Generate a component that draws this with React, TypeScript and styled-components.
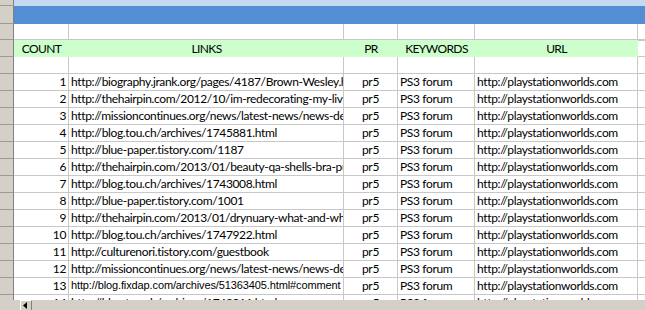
import React from "react";
import styled, { createGlobalStyle } from "styled-components";

const Global = createGlobalStyle`
  html, body { margin: 0; padding: 0; background: #ffffff; }
  body { width: 645px; height: 310px; overflow: hidden; }
`;

const COLS = "14px 55px 275px 54px 77px 163px 1fr";

const Sheet = styled.div`
  width: 645px;
  height: 310px;
  display: flex;
  flex-direction: column;
  background: #ffffff;
  font-family: Lato, "Liberation Sans", sans-serif;
  font-size: 12px;
  letter-spacing: -0.35px;
  color: #000000;
  overflow: hidden;
`;

const Rows = styled.div`
  flex: 1;
  display: flex;
  flex-direction: column;
  overflow: hidden;
`;

const Row = styled.div<{ $h: number }>`
  display: grid;
  grid-template-columns: ${COLS};
  height: ${(p) => p.$h}px;
  flex: none;
  overflow: hidden;
`;

const RowHead = styled.div`
  background: #d4d0c8;
  border-right: 1px solid #808080;
  border-bottom: 1px solid #9d9a94;
  box-sizing: border-box;
`;

const Band = styled.div<{ $bg: string }>`
  grid-column: 2 / -1;
  background: ${(p) => p.$bg};
`;

const Cell = styled.div<{ $align?: string; $arial?: boolean; $noRight?: boolean }>`
  box-sizing: border-box;
  border-right: ${(p) => (p.$noRight ? "none" : "1px solid #c8c8c8")};
  border-bottom: 1px solid #c8c8c8;
  display: flex;
  align-items: flex-end;
  justify-content: ${(p) => p.$align || "flex-start"};
  padding: 0 2px 1px 2px;
  white-space: nowrap;
  overflow: hidden;
  line-height: 15px;
  font-family: ${(p) => (p.$arial ? '"Liberation Sans", Arial, sans-serif' : "inherit")};
  font-size: ${(p) => (p.$arial ? "11px" : "inherit")};
  letter-spacing: ${(p) => (p.$arial ? "-0.12px" : "inherit")};
`;

const HeadCell = styled.div<{ $last?: boolean }>`
  box-sizing: border-box;
  background: ${(p) => (p.$last ? "#ffffff" : "#ccffcc")};
  border-bottom: 1px solid ${(p) => (p.$last ? "#c8c8c8" : "#ccffcc")};
  border-top: ${(p) => (p.$last ? "1px solid #c8c8c8" : "none")};
  display: flex;
  align-items: center;
  justify-content: center;
  white-space: nowrap;
  padding-top: 1px;
  letter-spacing: -0.6px;
`;

const ScrollBar = styled.div`
  height: 10px;
  flex: none;
  background: #d4d0c8;
  display: flex;
  padding-left: 20px;
`;

const ArrowBtn = styled.div`
  width: 12px;
  height: 10px;
  box-sizing: border-box;
  border-left: 1px solid #ffffff;
  border-top: 1px solid #ffffff;
  border-right: 1px solid #808080;
  background: #d4d0c8;
  display: flex;
  align-items: center;
  padding-left: 2px;
`;

type DataRow = { n: string; link: string; arial?: boolean };

const data: DataRow[] = [
  { n: "1", link: "http://biography.jrank.org/pages/4187/Brown-Wesley.html" },
  { n: "2", link: "http://thehairpin.com/2012/10/im-redecorating-my-living-room" },
  { n: "3", link: "http://missioncontinues.org/news/latest-news/news-details" },
  { n: "4", link: "http://blog.tou.ch/archives/1745881.html" },
  { n: "5", link: "http://blue-paper.tistory.com/1187" },
  { n: "6", link: "http://thehairpin.com/2013/01/beauty-qa-shells-bra-purchase" },
  { n: "7", link: "http://blog.tou.ch/archives/1743008.html" },
  { n: "8", link: "http://blue-paper.tistory.com/1001" },
  { n: "9", link: "http://thehairpin.com/2013/01/drynuary-what-and-why/#comments" },
  { n: "10", link: "http://blog.tou.ch/archives/1747922.html" },
  { n: "11", link: "http://culturenori.tistory.com/guestbook" },
  { n: "12", link: "http://missioncontinues.org/news/latest-news/news-details" },
  { n: "13", link: "http://blog.fixdap.com/archives/51363405.html#comment", arial: true },
  { n: "14", link: "http://blog.tou.ch/archives/1748011.html" },
];

const Blank = () => (
  <>
    <Cell />
    <Cell />
    <Cell />
    <Cell />
    <Cell />
    <Cell $noRight />
  </>
);

export default function App() {
  return (
    <Sheet>
      <Global />
      <Rows>
        <Row $h={6}>
          <RowHead />
          <Band $bg="#c5d9f1" />
        </Row>
        <Row $h={18}>
          <RowHead />
          <Band $bg="#538ed5" />
        </Row>
        <Row $h={16}>
          <RowHead />
          <Blank />
        </Row>
        <Row $h={17}>
          <RowHead />
          <HeadCell>COUNT</HeadCell>
          <HeadCell>LINKS</HeadCell>
          <HeadCell>PR</HeadCell>
          <HeadCell>KEYWORDS</HeadCell>
          <HeadCell>URL</HeadCell>
          <HeadCell $last />
        </Row>
        <Row $h={17}>
          <RowHead />
          <Blank />
        </Row>
        {data.map((r) => (
          <Row $h={17} key={r.n}>
            <RowHead />
            <Cell $align="flex-end">{r.n}</Cell>
            <Cell $arial={r.arial}>{r.link}</Cell>
            <Cell $align="center">pr5</Cell>
            <Cell>PS3 forum</Cell>
            <Cell>http://playstationworlds.com</Cell>
            <Cell $noRight />
          </Row>
        ))}
      </Rows>
      <ScrollBar>
        <ArrowBtn>
          <svg width="4" height="7" viewBox="0 0 4 7">
            <path d="M4 0 L0 3.5 L4 7 Z" fill="#000" />
          </svg>
        </ArrowBtn>
      </ScrollBar>
    </Sheet>
  );
}
